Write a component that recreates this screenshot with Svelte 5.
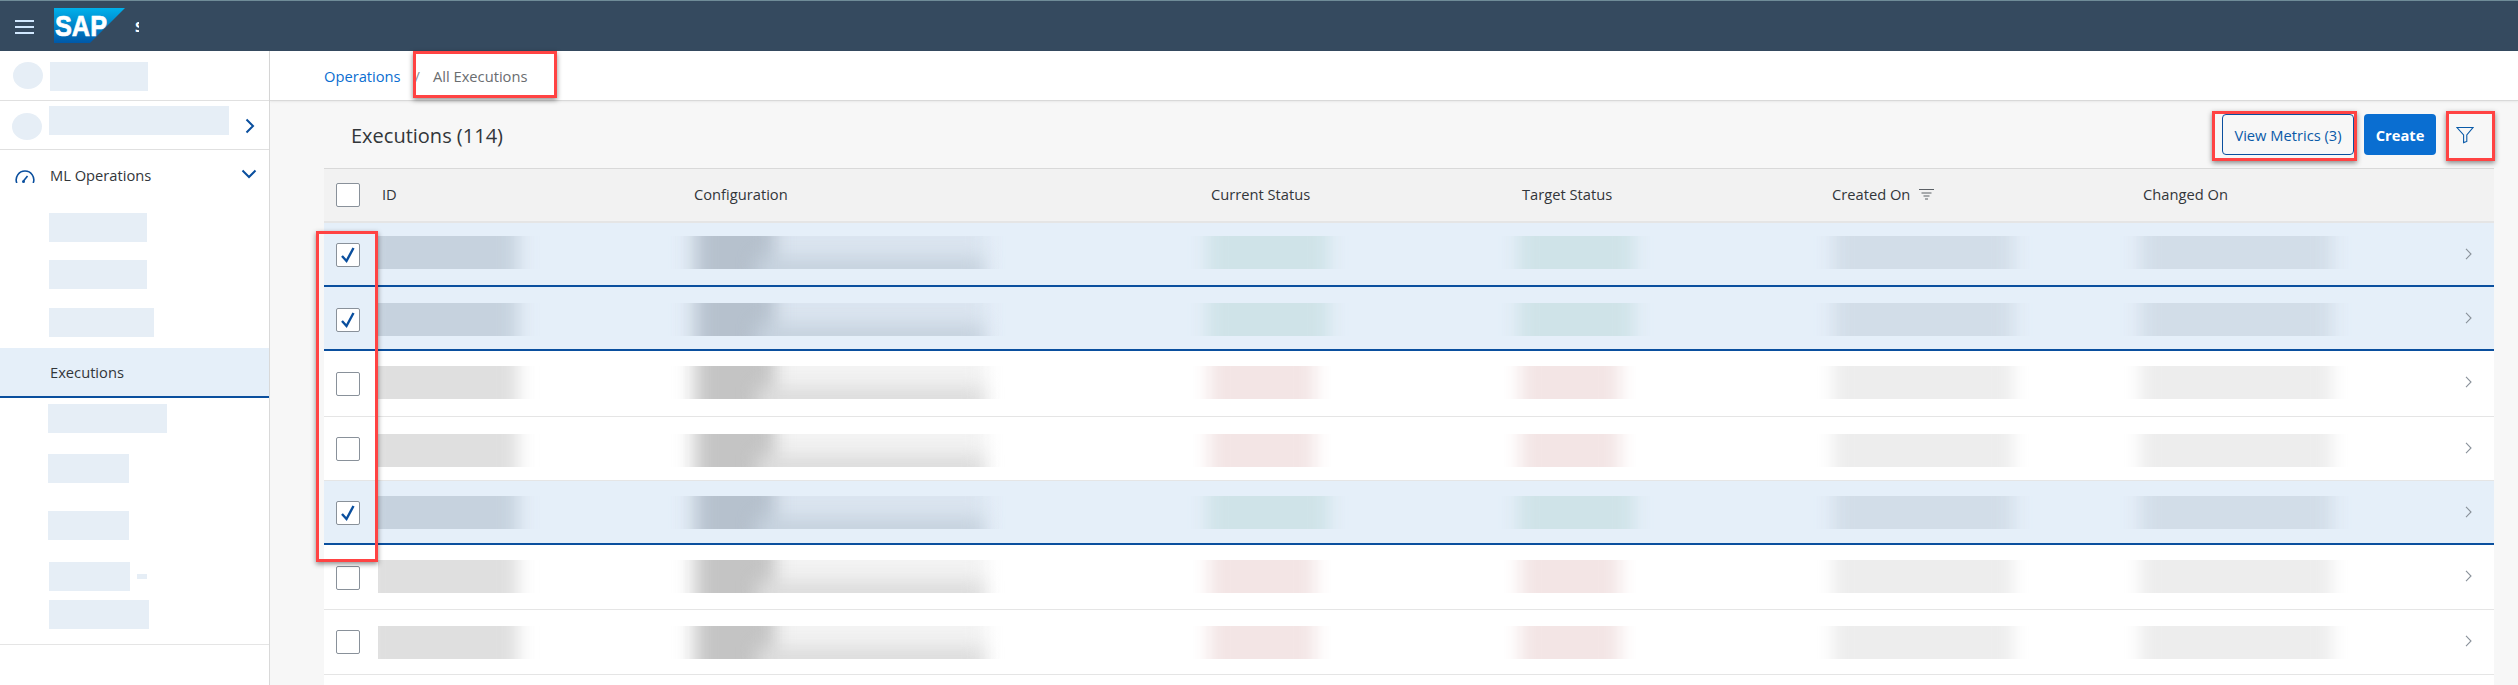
<script lang="ts">
    const subTop = [
        { left: 49, width: 98, gap: 13 },
        { left: 49, width: 98, gap: 18 },
        { left: 49, width: 105, gap: 19 },
    ];
    const subBottom = [
        { left: 48, width: 119, gap: 6 },
        { left: 48, width: 81, gap: 21 },
        { left: 48, width: 81, gap: 28 },
        { left: 49, width: 81, gap: 22, extra: true },
        { left: 49, width: 100, gap: 9 },
    ];

    const columns = [
        { label: "ID" },
        { label: "Configuration" },
        { label: "Current Status" },
        { label: "Target Status" },
        { label: "Created On", sorted: true },
        { label: "Changed On" },
    ];

    // height and the small offsets differ by a pixel from row to row in the capture
    const rows = [
        { selected: true, height: 64, blot: 13, box: 20 },
        { selected: true, height: 64, blot: 16, box: 21 },
        { selected: false, height: 66, blot: 15, box: 21 },
        { selected: false, height: 64, blot: 17, box: 20 },
        { selected: true, height: 64, blot: 15, box: 20 },
        { selected: false, height: 65, blot: 15, box: 21 },
        { selected: false, height: 65, blot: 16, box: 20 },
    ];

    const marks = [
        { x: 413, y: 51, w: 144, h: 47 },
        { x: 316, y: 231, w: 62, h: 331 },
        { x: 2212, y: 111, w: 145, h: 50 },
        { x: 2446, y: 111, w: 49, h: 50 },
    ];
</script>

<div class="page">
    <header class="shell-bar">
        <button class="menu" aria-label="Menu">
            <span></span><span></span><span></span>
        </button>
        <svg class="logo" width="71" height="35" viewBox="0 0 71 35">
            <defs>
                <linearGradient id="sap" x1="0" y1="0" x2="0" y2="1">
                    <stop offset="0" stop-color="#00b1eb" />
                    <stop offset="1" stop-color="#0058a8" />
                </linearGradient>
            </defs>
            <polygon points="0,0 71,0 36,35 0,35" fill="url(#sap)" />
            <text x="1" y="28" textLength="52" lengthAdjust="spacingAndGlyphs">SAP</text>
        </svg>
        <span class="product">S</span>
    </header>

    <div class="body">
        <nav class="side">
            <div class="side-row first">
                <span class="dot"></span>
                <span class="ph first-ph"></span>
            </div>
            <div class="side-row second">
                <span class="dot"></span>
                <span class="ph second-ph"></span>
                <svg class="chev-right" width="10" height="16" viewBox="0 0 10 16">
                    <path d="M1.5 1.5 L8 8 L1.5 14.5" />
                </svg>
            </div>
            <div class="side-group">
                <svg class="gauge" width="20" height="14" viewBox="0 0 20 14">
                    <path d="M1.8 14 A8.8 8.8 0 1 1 18.2 14" />
                    <path d="M8.5 12 L12.5 7" />
                    <circle cx="8.5" cy="12.5" r="1.5" />
                </svg>
                <span class="side-label">ML Operations</span>
                <svg class="chev-down" width="16" height="10" viewBox="0 0 16 10">
                    <path d="M1.5 1.5 L8 8 L14.5 1.5" />
                </svg>
            </div>

            {#each subTop as item}
                <span class="ph sub" style="margin-left:{item.left}px;width:{item.width}px;margin-top:{item.gap}px"></span>
            {/each}

            <div class="side-active"><span class="side-label">Executions</span></div>

            {#each subBottom as item}
                <div class="sub-line" style="margin-top:{item.gap}px">
                    <span class="ph sub" style="margin-left:{item.left}px;width:{item.width}px"></span>
                    {#if item.extra}<span class="ph tiny"></span>{/if}
                </div>
            {/each}

            <div class="side-divider"></div>
        </nav>

        <main class="content">
            <div class="crumbs">
                <span class="crumb-link">Operations</span>
                <span class="crumb-sep">/</span>
                <span class="crumb-current">All Executions</span>
            </div>

            <div class="toolbar">
                <h1>Executions (114)</h1>
                <button class="btn ghost">View Metrics (3)</button>
                <button class="btn primary">Create</button>
                <button class="icon-btn" aria-label="Filter">
                    <svg width="18" height="18" viewBox="0 0 18 18">
                        <path d="M1 1.5 H17 L10.8 9 V15.4 L7.6 16.6 V9 Z" />
                    </svg>
                </button>
            </div>

            <section class="table">
                <div class="grid head">
                    <div class="cell-check"><span class="box"></span></div>
                    {#each columns as col}
                        <div class="th">
                            {col.label}
                            {#if col.sorted}
                                <svg class="sort" width="15" height="11" viewBox="0 0 15 11">
                                    <path d="M0 .5 H15 M2.5 4 H12.5 M4.5 7 H10.5 M6 10 H9" />
                                </svg>
                            {/if}
                        </div>
                    {/each}
                </div>

                {#each rows as row}
                    <div class="grid row" class:selected={row.selected} style="height:{row.height}px;--blot-top:{row.blot}px">
                        <div class="cell-check">
                            <span class="box" style="margin-top:{row.box}px">
                                {#if row.selected}
                                    <svg width="16" height="18" viewBox="0 0 16 18">
                                        <path d="M2 10 L6.5 15 L13.5 2" />
                                    </svg>
                                {/if}
                            </span>
                        </div>
                        <div><div class="blot b-id"></div></div>
                        <div>
                            <div class="blot b-config">
                                <i class="cfg-base"></i>
                                <i class="cfg-dark"></i>
                                <i class="cfg-low"></i>
                            </div>
                        </div>
                        <div><div class="blot b-status"></div></div>
                        <div><div class="blot b-target"></div></div>
                        <div><div class="blot b-date"></div></div>
                        <div class="last-cell">
                            <div class="blot b-changed"></div>
                            <svg class="row-nav" width="7" height="12" viewBox="0 0 7 12">
                                <path d="M1 .8 L6 6 L1 11.2" />
                            </svg>
                        </div>
                    </div>
                {/each}
            </section>
        </main>
    </div>

    {#each marks as m}
        <div class="mark" style="left:{m.x}px;top:{m.y}px;width:{m.w}px;height:{m.h}px"></div>
    {/each}
</div>

<style>
    :global(body) {
        margin: 0;
        background: #fff;
    }

    .page {
        position: relative;
        height: 685px;
        overflow: hidden;
        display: flex;
        flex-direction: column;
        font-family: "Open Sans", "Noto Sans", sans-serif;
        font-size: 14.7px;
        color: #32363a;
    }

    button {
        font: inherit;
        padding: 0;
        background: none;
        border: none;
    }

    .shell-bar {
        flex: none;
        box-sizing: border-box;
        height: 51px;
        display: flex;
        align-items: flex-start;
        background: #354a5f;
        border-top: 1px solid #6f8c98;
    }

    .menu {
        display: flex;
        flex-direction: column;
        gap: 4px;
        width: 19px;
        margin: 19px 0 0 15px;
    }

    .menu span {
        height: 2px;
        background: #d1e8ff;
    }

    .logo {
        margin: 7px 0 0 20px;
    }

    .logo text {
        font-family: "Liberation Sans", sans-serif;
        font-size: 30px;
        font-weight: 700;
        fill: #fff;
        stroke: #fff;
        stroke-width: 0.7px;
    }

    .product {
        width: 4px;
        margin: 15px 0 0 10px;
        overflow: hidden;
        color: #fff;
        font-weight: 700;
        line-height: 20px;
    }

    .body {
        flex: 1;
        display: flex;
        min-height: 0;
    }

    .side {
        flex: none;
        box-sizing: border-box;
        width: 270px;
        display: flex;
        flex-direction: column;
        background: #fff;
        border-right: 1px solid #d9d9d9;
    }

    .side-row {
        position: relative;
        box-sizing: border-box;
        display: flex;
        border-bottom: 1px solid #e0e0e0;
    }

    .first {
        height: 50px;
        padding: 11px 0 0 13px;
        gap: 7px;
    }

    .second {
        height: 49px;
        padding: 5px 0 0 12px;
        gap: 7px;
    }

    .second .dot {
        margin-top: 7px;
    }

    .dot {
        width: 30px;
        height: 27px;
        border-radius: 50%;
        background: #e6eef6;
    }

    .ph {
        display: block;
        height: 29px;
        background: #e6eef6;
    }

    .first-ph {
        width: 98px;
    }

    .second-ph {
        width: 180px;
    }

    .chev-right {
        margin: 12px 0 0 9px;
    }

    .chev-right path,
    .chev-down path {
        fill: none;
        stroke: #0a4f9e;
        stroke-width: 2;
    }

    .side-group {
        height: 50px;
        display: flex;
        align-items: center;
        padding-left: 15px;
    }

    .gauge {
        margin-top: 1px;
    }

    .gauge path {
        fill: none;
        stroke: #0a4f9e;
        stroke-width: 1.6;
    }

    .gauge circle {
        fill: #0a4f9e;
    }

    .side-group .side-label {
        margin-left: 15px;
    }

    .chev-down {
        margin: -2px 0 0 auto;
        margin-right: 12px;
    }

    .sub-line {
        display: flex;
        align-items: center;
    }

    .tiny {
        width: 10px;
        height: 5px;
        margin-left: 7px;
    }

    .side-active {
        box-sizing: border-box;
        height: 50px;
        margin-top: 11px;
        padding-left: 50px;
        display: flex;
        align-items: center;
        background: #e5eff9;
        border-bottom: 2px solid #0a4f9e;
    }

    .side-divider {
        height: 1px;
        margin-top: 15px;
        background: #e5e5e5;
    }

    .content {
        flex: 1;
        min-width: 0;
        display: flex;
        flex-direction: column;
        background: #f7f7f7;
    }

    .crumbs {
        flex: none;
        box-sizing: border-box;
        height: 50px;
        display: flex;
        align-items: center;
        padding-left: 54px;
        background: #fff;
        border-bottom: 1px solid #d9d9d9;
        box-shadow: 0 1px 2px rgba(0, 0, 0, 0.06);
    }

    .crumb-link {
        color: #0a6ed1;
    }

    .crumb-sep {
        margin: 0 13px 0 14px;
        color: #89919a;
    }

    .crumb-current {
        color: #6a6d70;
    }

    .toolbar {
        flex: none;
        box-sizing: border-box;
        height: 67px;
        display: flex;
        align-items: flex-start;
        padding: 13px 44px 0 81px;
    }

    h1 {
        margin: 7px auto 0 0;
        font-size: 20px;
        font-weight: 400;
        line-height: 30px;
    }

    .btn {
        box-sizing: border-box;
        height: 41px;
        border-radius: 4px;
    }

    .ghost {
        width: 132px;
        color: #0a5aa8;
        border: 1px solid #0a4f9e;
    }

    .primary {
        width: 72px;
        margin-left: 10px;
        background: #0a6ed1;
        color: #fff;
        font-weight: 700;
    }

    .icon-btn {
        width: 18px;
        height: 18px;
        margin: 12px 0 0 20px;
    }

    .icon-btn path {
        fill: none;
        stroke: #0a5aa8;
        stroke-width: 1.1;
    }

    .table {
        flex: 1;
        margin: 0 24px 0 54px;
        background: #fff;
    }

    .grid {
        display: grid;
        grid-template-columns: 58px 312px 517px 311px 310px 311px 351px;
        box-sizing: border-box;
    }

    .head {
        height: 55px;
        background: #f2f2f2;
        border-top: 1px solid #d9d9d9;
        border-bottom: 2px solid #e5e5e5;
    }

    .head .cell-check {
        display: flex;
        align-items: center;
    }

    .th {
        display: flex;
        align-items: center;
        gap: 9px;
        margin-top: -2px;
    }

    .sort path {
        fill: none;
        stroke: #5b6065;
        stroke-width: 1.2;
    }

    .cell-check {
        padding-left: 12px;
    }

    .box {
        box-sizing: border-box;
        display: flex;
        align-items: center;
        justify-content: center;
        width: 24px;
        height: 24px;
        background: #fff;
        border: 1px solid #89919a;
        border-radius: 2px;
    }

    .box path {
        fill: none;
        stroke: #0a4f9e;
        stroke-width: 2.4;
    }

    .row {
        border-bottom: 1px solid #e5e5e5;
    }

    .row.selected {
        background: #e5eff9;
        border-bottom: 2px solid #0a4f9e;
    }

    .blot {
        position: relative;
        height: 33px;
        margin-top: var(--blot-top);
        overflow: hidden;
    }

    .blot::before,
    .blot i {
        content: "";
        position: absolute;
        top: -24px;
        bottom: -24px;
        left: 20px;
        right: 20px;
        background: var(--tone);
        filter: blur(9px);
    }

    .b-id {
        width: 168px;
        margin-left: -4px;
        --tone: #dfdfdf;
    }

    .b-id::before {
        left: -14px;
        right: 28px;
    }

    .b-status,
    .b-target {
        --tone: #f3e5e5;
    }

    .b-status {
        width: 146px;
        margin-left: -22px;
    }

    .b-target {
        width: 140px;
        margin-left: -22px;
    }

    .selected .b-status {
        width: 162px;
        margin-left: -24px;
    }

    .selected .b-target {
        width: 156px;
        margin-left: -24px;
    }

    .b-date {
        width: 220px;
        margin-left: -19px;
        --tone: #ededed;
    }

    .b-changed {
        width: 232px;
        margin-left: -23px;
        --tone: #ededed;
    }

    .b-config {
        width: 340px;
        margin-left: -27px;
    }

    .b-config::before {
        display: none;
    }

    .blot .cfg-base {
        background: #f3f3f3;
    }

    .blot .cfg-dark {
        left: 30px;
        right: 232px;
        background: #c4c4c4;
    }

    .blot .cfg-low {
        top: 21px;
        left: 90px;
        right: 24px;
        background: #dcdcdc;
    }

    .selected .b-id {
        --tone: #c6d2de;
    }

    .selected .b-status,
    .selected .b-target {
        --tone: #cfe3e8;
    }

    .selected .b-date,
    .selected .b-changed {
        --tone: #d2dde8;
    }

    .selected .blot .cfg-base {
        background: #dbe5f0;
    }

    .selected .blot .cfg-dark {
        background: #b6c1cd;
    }

    .selected .blot .cfg-low {
        background: #c6d2de;
    }

    .last-cell {
        position: relative;
    }

    .row-nav {
        position: absolute;
        top: 25px;
        right: 22px;
    }

    .row-nav path {
        fill: none;
        stroke: #89919a;
        stroke-width: 1.1;
    }

    .mark {
        position: absolute;
        box-sizing: border-box;
        border: 3px solid #ff4343;
        box-shadow: 0 2px 5px rgba(0, 0, 0, 0.45);
    }
</style>
